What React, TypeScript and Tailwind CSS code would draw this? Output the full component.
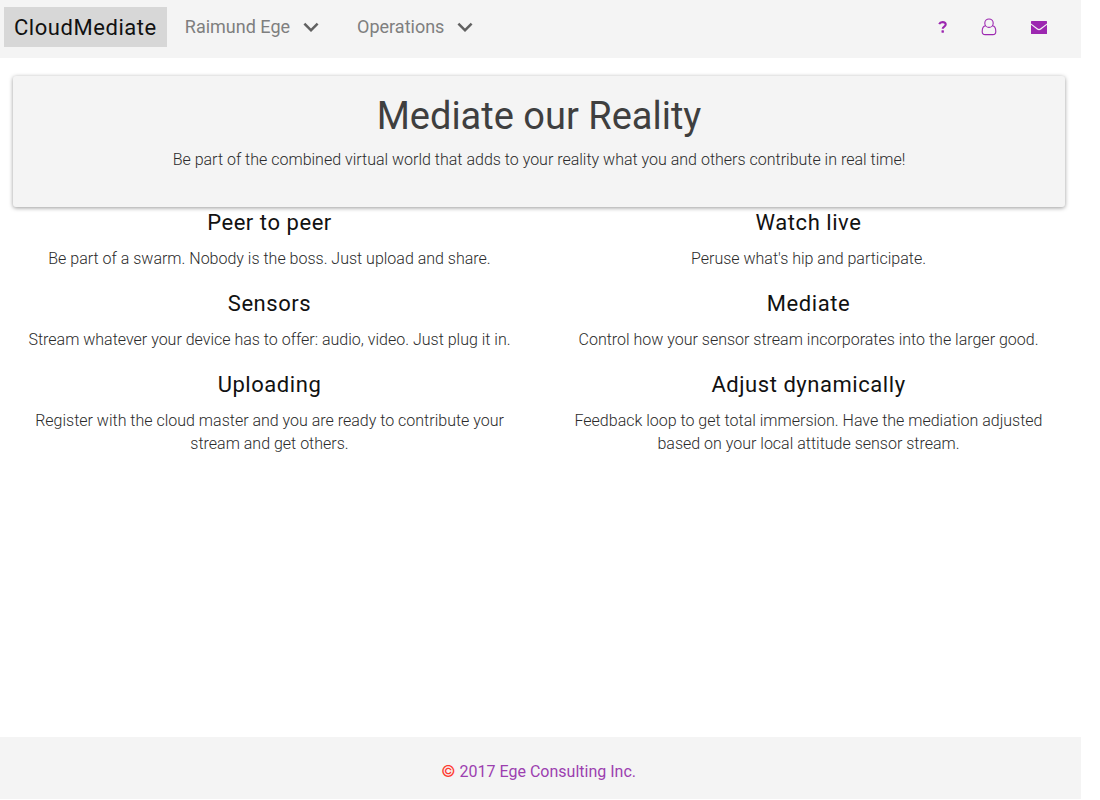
import type { ReactNode } from "react";
import { MdExpandMore } from "react-icons/md";

const features = [
  { title: "Peer to peer", text: "Be part of a swarm. Nobody is the boss. Just upload and share." },
  { title: "Watch live", text: "Peruse what's hip and participate." },
  { title: "Sensors", text: "Stream whatever your device has to offer: audio, video. Just plug it in." },
  { title: "Mediate", text: "Control how your sensor stream incorporates into the larger good." },
  { title: "Uploading", text: "Register with the cloud master and you are ready to contribute your stream and get others." },
  {
    title: "Adjust dynamically",
    text: "Feedback loop to get total immersion. Have the mediation adjusted based on your local attitude sensor stream.",
  },
];

function MenuButton({ children }: { children: ReactNode }) {
  return (
    <button type="button" aria-haspopup="menu" className="flex items-center gap-[6px] text-lg text-[#7f7f7f]">
      {children}
      <MdExpandMore className="size-[30px] text-[#616161]" aria-hidden="true" />
    </button>
  );
}

function HelpIcon() {
  return (
    <svg viewBox="0 0 9 12" className="h-3 w-[9px]" fill="none" aria-hidden="true">
      <path d="M1.2 3.2C1.8 1.8 2.9 1.1 4.5 1.1C6.4 1.1 7.7 2.1 7.7 3.6C7.7 5.7 4.7 5.5 4.7 7.7" stroke="currentColor" strokeWidth="2.1" />
      <rect x="3.5" y="9.3" width="2.4" height="2.4" rx="0.4" fill="currentColor" />
    </svg>
  );
}

function UserIcon() {
  return (
    <svg viewBox="0 0 16 18" className="h-[18px] w-4" fill="none" stroke="currentColor" strokeWidth="1.1" aria-hidden="true">
      <circle cx="8" cy="5.2" r="4.2" />
      <path d="M4.6 7.8C2 8.2 1.2 10.8 1.2 13.4C1.2 15.6 2.4 16.6 4.2 16.6H11.8C13.6 16.6 14.8 15.6 14.8 13.4C14.8 10.8 14 8.2 11.4 7.8" />
    </svg>
  );
}

function MailIcon() {
  return (
    <svg viewBox="0 0 16 13" className="h-[13px] w-4" fill="currentColor" aria-hidden="true">
      <path d="M0 0.5Q0 0 0.5 0H15.5Q16 0 16 0.5V2.4L9.2 7.6Q8 8.4 6.8 7.6L0 2.4Z" />
      <path d="M0 3.7L6 8.5Q8 10 10 8.5L16 3.7V12.5Q16 13 15.5 13H0.5Q0 13 0 12.5Z" />
    </svg>
  );
}

export default function App() {
  return (
    <div className="flex min-h-screen flex-col bg-white pr-[19px] pb-px font-[Roboto,sans-serif] text-[#2b2b2b]">
      <header className="flex h-[58px] items-start justify-between bg-[#f4f4f4] pt-[7px] pr-[34px] pl-1">
        <nav className="flex items-center" aria-label="Main">
          <a
            href="#home"
            className="mr-[18px] flex h-10 items-center bg-[#d7d7d7] px-[10px] text-[22px] tracking-wide text-[#111111]"
          >
            CloudMediate
          </a>
          <div className="flex items-center gap-[31px]">
            <MenuButton>Raimund Ege</MenuButton>
            <MenuButton>Operations</MenuButton>
          </div>
        </nav>
        <div className="flex h-10 items-center gap-[34px] text-[#9c27b0]">
          <a href="#help" aria-label="Help">
            <HelpIcon />
          </a>
          <a href="#account" aria-label="Account">
            <UserIcon />
          </a>
          <a href="#mail" aria-label="Mail">
            <MailIcon />
          </a>
        </div>
      </header>

      <main className="flex-1 pt-[18px] pr-[3px]">
        <section className="mx-[13px] flex h-[131px] flex-col items-center rounded-[3px] bg-[#f4f4f4] pt-4 text-center shadow-[0_1px_4px_rgba(0,0,0,0.4)]">
          <h1 className="text-[38px] leading-[48px] text-[#3f3f3f]">Mediate our Reality</h1>
          <p className="mt-2 text-base leading-[23px] font-light">
            Be part of the combined virtual world that adds to your reality what you and others contribute in real time!
          </p>
        </section>
        <div className="grid grid-cols-2 gap-y-[18px] text-center">
          {features.map((feature) => (
            <article key={feature.title} className="px-[18px]">
              <h2 className="text-[22px] leading-8 tracking-wide text-[#111111]">{feature.title}</h2>
              <p className="mt-2 text-base leading-[23px] font-light">{feature.text}</p>
            </article>
          ))}
        </div>
      </main>

      <footer className="flex h-[62px] items-center justify-center bg-[#f4f4f4] pt-[6px] pr-1 text-base">
        <a href="#about" className="text-[#9c3fb0]">
          <span className="font-[Inter,sans-serif] text-[#ff3b30]">©</span> 2017 Ege Consulting Inc.
        </a>
      </footer>
    </div>
  );
}
